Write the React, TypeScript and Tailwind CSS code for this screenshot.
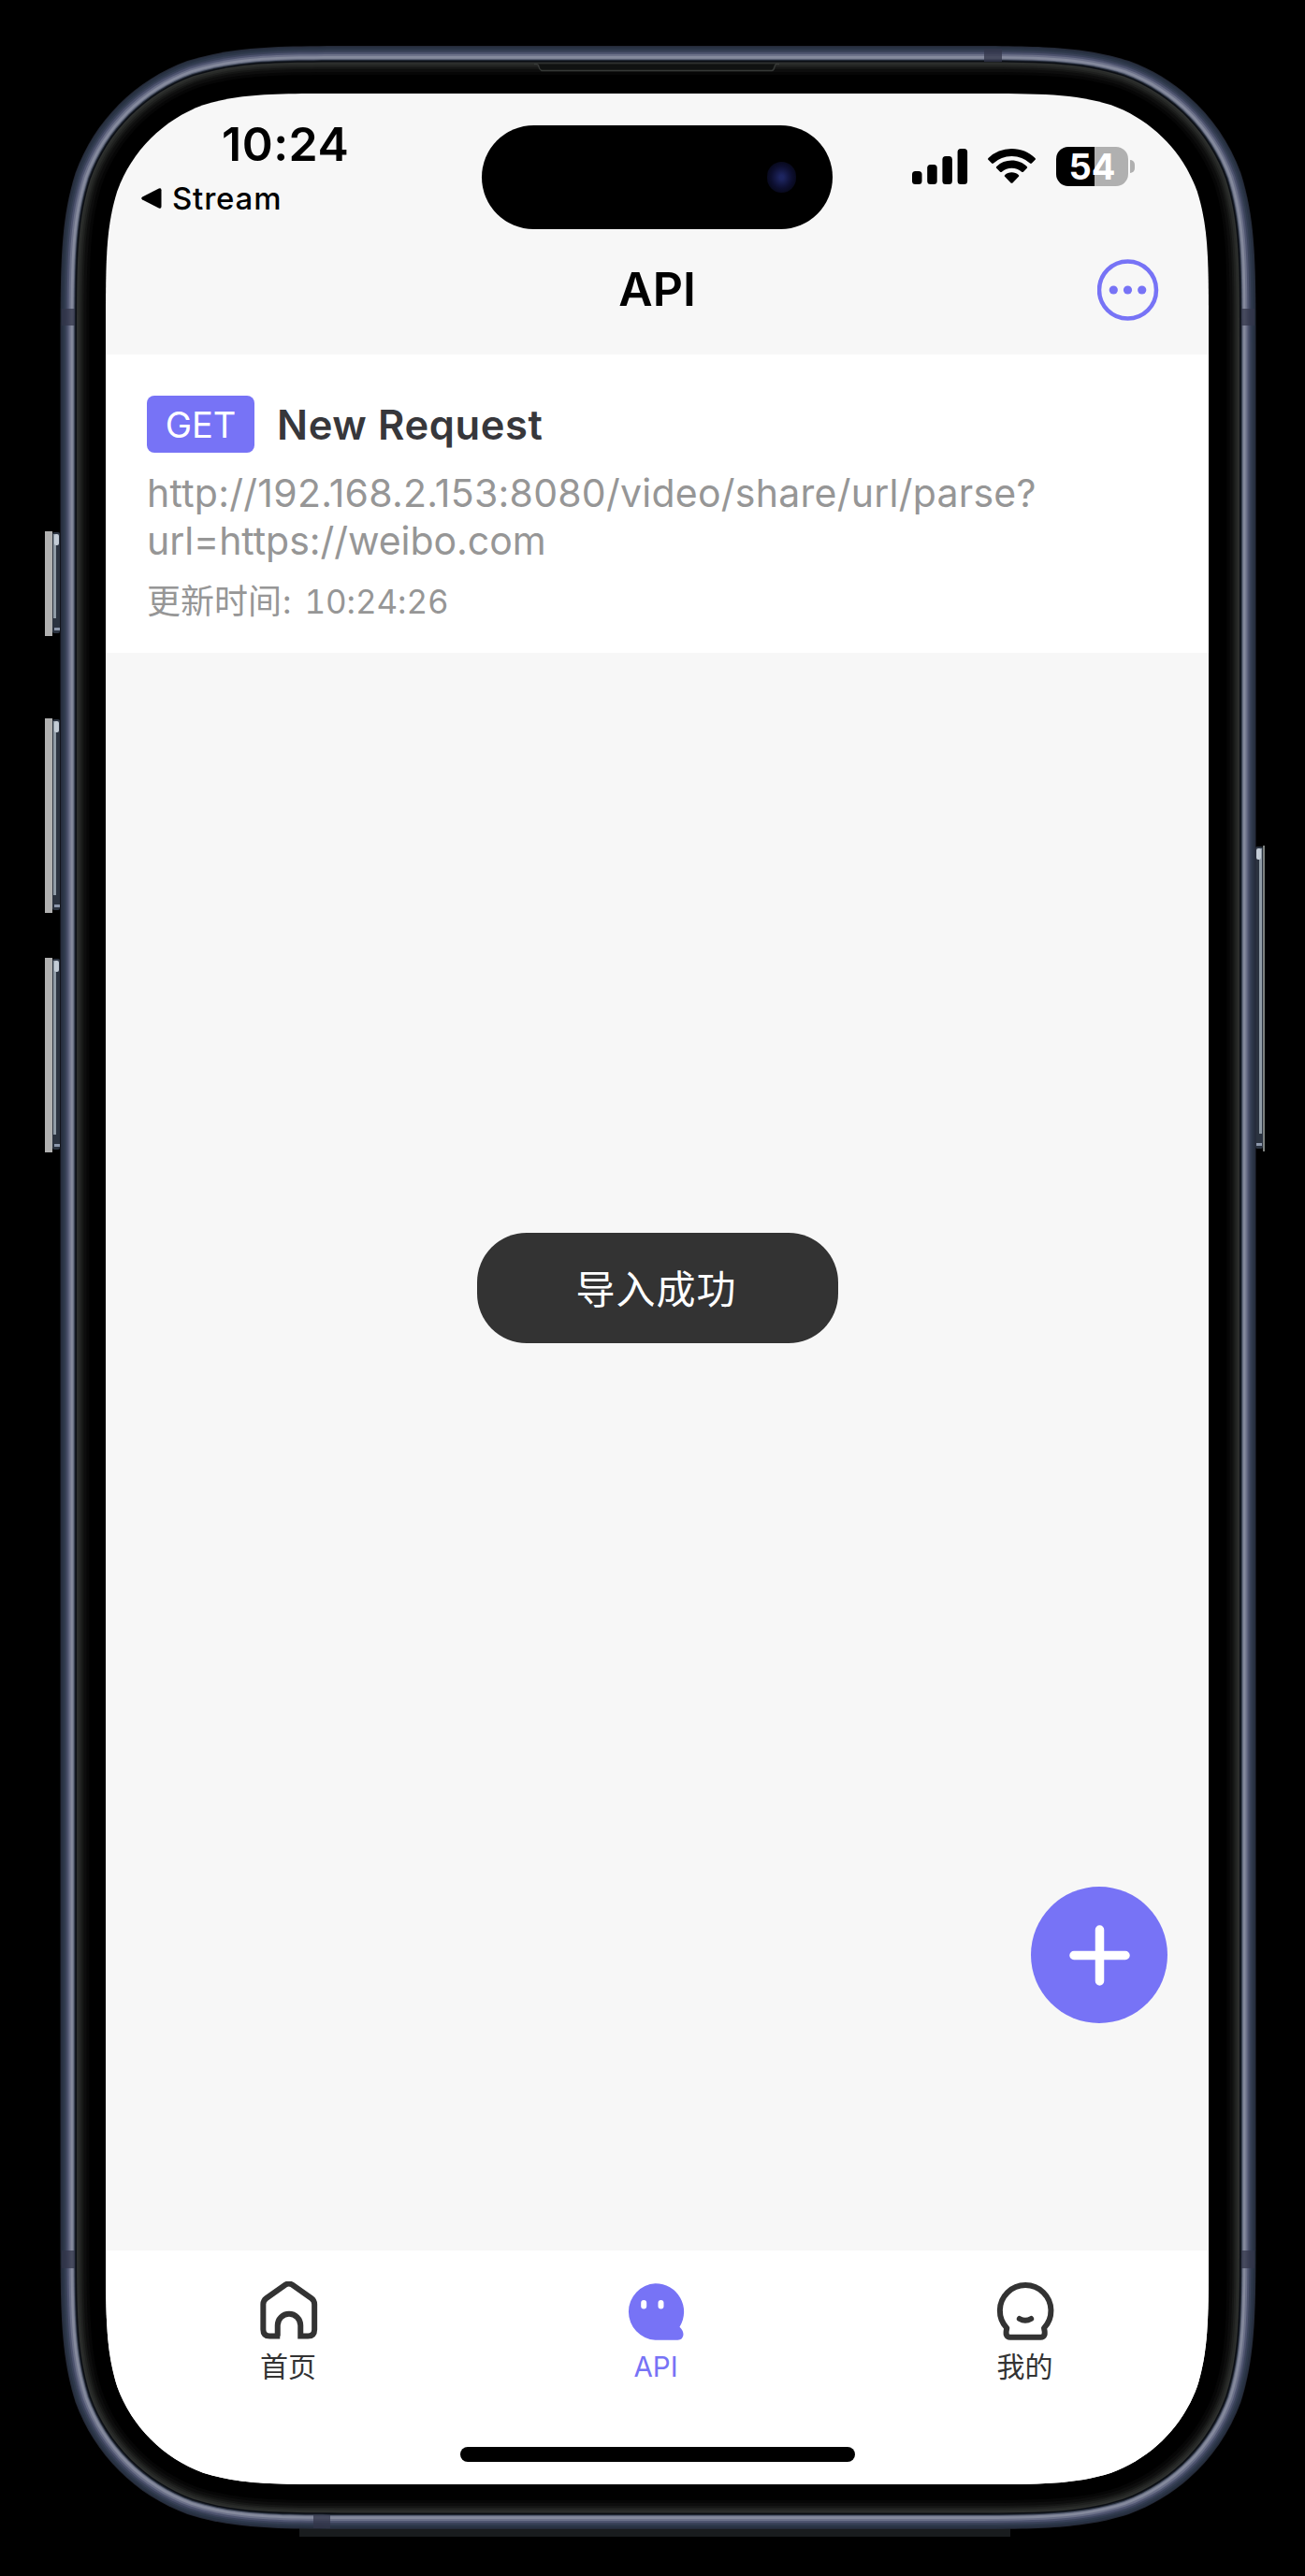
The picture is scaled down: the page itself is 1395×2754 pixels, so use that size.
import React from "react";

const W = 1395;
const H = 2754;

// Rounded rectangle with continuous-curvature corners.
function squircle(x0: number, y0: number, x1: number, y1: number, r: number) {
  const a = 1.528665 * r;
  const b = 1.08849296 * r;
  const c = 0.86840694 * r;
  const d = 0.63149379 * r;
  const e = 0.07491139 * r;
  const f = 0.37282383 * r;
  const g = 0.16905956 * r;
  return [
    `M${x0 + a} ${y0}L${x1 - a} ${y0}`,
    `C${x1 - b} ${y0} ${x1 - c} ${y0} ${x1 - d} ${y0 + e}`,
    `C${x1 - f} ${y0 + g} ${x1 - g} ${y0 + f} ${x1 - e} ${y0 + d}`,
    `C${x1} ${y0 + c} ${x1} ${y0 + b} ${x1} ${y0 + a}L${x1} ${y1 - a}`,
    `C${x1} ${y1 - b} ${x1} ${y1 - c} ${x1 - e} ${y1 - d}`,
    `C${x1 - g} ${y1 - f} ${x1 - f} ${y1 - g} ${x1 - d} ${y1 - e}`,
    `C${x1 - c} ${y1} ${x1 - b} ${y1} ${x1 - a} ${y1}L${x0 + a} ${y1}`,
    `C${x0 + b} ${y1} ${x0 + c} ${y1} ${x0 + d} ${y1 - e}`,
    `C${x0 + f} ${y1 - g} ${x0 + g} ${y1 - f} ${x0 + e} ${y1 - d}`,
    `C${x0} ${y1 - c} ${x0} ${y1 - b} ${x0} ${y1 - a}L${x0} ${y0 + a}`,
    `C${x0} ${y0 + b} ${x0} ${y0 + c} ${x0 + e} ${y0 + d}`,
    `C${x0 + g} ${y0 + f} ${x0 + f} ${y0 + g} ${x0 + d} ${y0 + e}`,
    `C${x0 + c} ${y0} ${x0 + b} ${y0} ${x0 + a} ${y0}Z`,
  ].join("");
}

// Metal rim, from the outer edge inwards: [inset, colour].
const RIM: [number, string][] = [
  [0, "#242936"],
  [1, "#283142"],
  [3, "#2e394b"],
  [5, "#3a4259"],
  [7, "#4e546f"],
  [9, "#6c7189"],
  [11, "#858a9d"],
  [13, "#7d8295"],
  [14, "#596074"],
  [15, "#232a37"],
  [16, "#0b0e14"],
  [17.5, "#2e302e"],
  [19, "#282a28"],
  [21, "#1f201f"],
  [23, "#151615"],
  [25, "#0d0d0d"],
  [28, "#060606"],
  [31, "#000000"],
];

function SideButton({ x, y, h, flip }: { x: number; y: number; h: number; flip?: boolean }) {
  return (
    <g transform={flip ? `translate(${x} ${y}) scale(-1 1)` : `translate(${x} ${y})`}>
      <rect x="0" y="0" width={flip ? 2 : 8} height={h} fill={flip ? "#7d817f" : "#b0b0b0"} />
      <rect x={flip ? 2 : 8} y="1" width="8" height={h - 4} rx="2" fill="#2b3340" />
      <rect x={flip ? 3 : 9} y="3" width="3" height={h - 22} fill="#8f9ba6" />
      <rect x={flip ? 4 : 10} y="3" width="5" height="12" rx="2" fill="#c3ccd6" />
      <rect x={flip ? 3 : 10} y={h - 9} width="6" height="3" fill="#8c97ab" />
    </g>
  );
}

function DeviceFrame() {
  return (
    <svg className="pointer-events-none absolute inset-0" width={W} height={H} viewBox={`0 0 ${W} ${H}`} aria-hidden="true">
      <SideButton x={48} y={568} h={112} />
      <SideButton x={48} y={768} h={208} />
      <SideButton x={48} y={1024} h={208} />
      <SideButton x={1352} y={904} h={327} flip />
      <rect x="320" y="2703" width="760" height="9" fill="#191c1e" />
      {RIM.map(([i, color]) => (
        <path key={i} d={squircle(64.5 + i, 49 + i, 1342.5 - i, 2704 - i, 215 - i)} fill={color} />
      ))}
      <g fill="#33364a" fillOpacity="0.75">
        <rect x="66" y="330" width="14" height="18" />
        <rect x="1327" y="330" width="14" height="18" />
        <rect x="66" y="2406" width="14" height="19" />
        <rect x="1327" y="2406" width="14" height="19" />
        <rect x="1052" y="52" width="19" height="14" />
        <rect x="335" y="2689" width="18" height="14" />
      </g>
      <path d="M571 68.500h2q2.500 0 3 3t3 4H825q2 0 3-4t3-3h2" fill="#101211" stroke="#363937" strokeWidth="1.500" />
    </svg>
  );
}

function StatusIcons() {
  return (
    <div className="flex items-center">
      <svg width="60" height="38" viewBox="0 0 60 38">
        <rect x="0" y="24" width="10.500" height="14" rx="3.500" />
        <rect x="16.200" y="17" width="10.500" height="21" rx="3.500" />
        <rect x="32.400" y="8" width="10.500" height="30" rx="3.500" />
        <rect x="48.600" y="0" width="10.500" height="38" rx="3.500" />
      </svg>
      <svg className="ml-[21px]" width="51" height="38" viewBox="0 0 51 38">
        <path d="M25.500 0C35.200 0 44 3.700 50.500 9.900c.6.600.6 1.300.1 1.900l-3.700 3.800c-.5.500-1.300.5-1.900 0A28.300 28.300 0 0 0 25.500 8 28.300 28.300 0 0 0 6 15.600c-.6.500-1.400.5-1.900 0L.4 11.800c-.5-.6-.5-1.300.1-1.900A36.200 36.200 0 0 1 25.500 0z" />
        <path d="M25.500 12.600c6.200 0 11.900 2.400 16.200 6.300.6.600.6 1.300.1 1.900l-3.900 3.900c-.5.500-1.200.5-1.800.1A15.600 15.600 0 0 0 25.500 20.700c-4 0-7.700 1.500-10.600 4.100-.6.400-1.300.4-1.800-.1l-3.900-3.900c-.5-.6-.5-1.300.1-1.900a24 24 0 0 1 16.200-6.300z" />
        <path d="M25.500 25.300c2.800 0 5.400 1 7.300 2.700.6.500.6 1.300.1 1.800l-6.400 6.600c-.6.600-1.400.6-2 0l-6.400-6.600c-.5-.5-.5-1.300.1-1.800 1.900-1.700 4.500-2.700 7.300-2.700z" />
      </svg>
      <div className="ml-[22px] flex h-[42px] w-[77px] items-center justify-center rounded-[13px] bg-linear-to-r from-black from-[41px] to-[#b0b0b0] to-[41px] text-[38px] leading-none font-bold text-white">
        54
      </div>
      <div className="ml-[2px] h-[14px] w-[5px] rounded-r-full bg-[#b0b0b0]" />
    </div>
  );
}

function StatusBar() {
  return (
    <div className="relative flex h-[156px] shrink-0 justify-between">
      <div className="pl-[38px]">
        <div className="mt-[26px] pl-[86px] text-[50px] leading-[56px] font-semibold tracking-[0.5px]">10:24</div>
        <div className="mt-[10px] flex items-center text-[33px] leading-[40px] font-medium tracking-[0.8px]">
          <svg width="22" height="22" viewBox="0 0 22 22">
            <path d="M1.200 9.600L18.800.6Q21.500-.4 21.500 2.200V19.800Q21.500 22.400 18.800 21.400L1.200 12.400Q-.8 11 1.200 9.600z" />
          </svg>
          <span className="ml-[11px]">Stream</span>
        </div>
      </div>
      <div className="mt-[57px] mr-[79px] h-[42px]">
        <StatusIcons />
      </div>
      <div className="absolute top-[34px] left-[402px] flex h-[111px] w-[375px] items-center justify-end rounded-full bg-black pr-[39px]">
        <div className="h-[33px] w-[31px] rounded-full bg-radial from-[#1d2560] from-10% via-[#0d0f30] via-50% to-[#030306]" />
      </div>
    </div>
  );
}

function NavBar() {
  return (
    <div className="relative flex h-[123px] shrink-0 items-start justify-center">
      <h1 className="mt-[23px] text-[50px] leading-[60px] font-semibold">API</h1>
      <svg className="absolute top-[21px] right-[53px]" width="66" height="66" viewBox="0 0 66 66" fill="#7773f6">
        <circle cx="32.500" cy="33" r="30.500" fill="none" stroke="#7773f6" strokeWidth="4.500" />
        <circle cx="17.300" cy="33" r="4.600" />
        <circle cx="32.500" cy="33" r="4.600" />
        <circle cx="47.700" cy="33" r="4.600" />
      </svg>
    </div>
  );
}

function RequestItem() {
  return (
    <div className="h-[319px] shrink-0 bg-white px-[44px] pt-[44px]">
      <div className="flex items-center">
        <span className="flex h-[61px] w-[115px] items-center justify-center rounded-[8px] bg-[#7773f6] text-[38px] leading-none text-white">
          GET
        </span>
        <span className="ml-[24px] text-[43.5px] leading-[60px] font-semibold tracking-[0.6px] whitespace-nowrap text-[#37373b]">New Request</span>
      </div>
      <div className="mt-[18px] text-[41px] leading-[50.5px] whitespace-nowrap text-[#969696]">
        <div className="tracking-[0.25px]">http://192.168.2.153:8080/video/share/url/parse?</div>
        <div className="tracking-[-0.05px]">url=https://weibo.com</div>
      </div>
      <div className="mt-[18px] text-[35px] leading-[44px] whitespace-nowrap text-[#969696] tabular-nums">
        <span className="text-[36px]">更新时间</span>
        <span className="ml-[1px]">:</span>
        <span className="ml-[14px] tracking-[-0.1px]">10:24:26</span>
      </div>
    </div>
  );
}

function TabBar() {
  return (
    <div className="relative grid h-[250px] shrink-0 grid-cols-3 bg-white pt-[33px] text-[30px] leading-[40px] text-[#333]">
      <div className="flex flex-col items-center pr-[3px]">
        <svg width="64" height="64" viewBox="0 0 64 64" fill="none" stroke="#333" strokeWidth="6">
          <path d="M22.500 58.500H11.500Q4.600 58.500 4.600 51.500V24.500Q4.600 20.500 8 18L28.500 3.600Q32 1.300 35.500 3.600L56 18Q59.400 20.500 59.400 24.500V51.500Q59.400 58.500 52.500 58.500H44.500V47A12.200 12.200 0 0 0 20 47V58.500" transform="translate(.75 0)" />
        </svg>
        <span className="mt-[7px]">首页</span>
      </div>
      <div className="flex flex-col items-center pr-[3px] text-[#7773f6]">
        <svg className="-ml-[1px]" width="64" height="64" viewBox="0 0 64 64">
          <path d="M31.500 2.200A30.400 30.400 0 0 1 57.500 48.700Q61.500 52.500 61.500 57Q61 62.500 55.500 62.700H31.500A30.300 30.300 0 0 1 31.500 2.200z" fill="#7773f6" />
          <rect x="16.200" y="20" width="6" height="9.500" rx="3" fill="#fff" />
          <rect x="34.500" y="20" width="6" height="9.500" rx="3" fill="#fff" />
        </svg>
        <span className="mt-[7px] text-[29.500px]">API</span>
      </div>
      <div className="flex flex-col items-center">
        <svg width="64" height="64" viewBox="0 0 64 64" fill="none" stroke="#333" strokeWidth="6" strokeLinecap="round" strokeLinejoin="round">
          <path d="M12.300 50A27.300 27.300 0 1 1 52 50Q54.600 59.700 48.500 59.700H15.800Q9.700 59.700 12.300 50z" />
          <path d="M25.800 40Q32 43.500 38.200 40" />
        </svg>
        <span className="mt-[7px]">我的</span>
      </div>
      <div className="absolute bottom-[24px] left-[379px] h-[16px] w-[422px] rounded-full bg-black" />
    </div>
  );
}

export default function App() {
  return (
    <div className="relative h-[2754px] w-[1395px] overflow-hidden bg-black pt-[100px] pl-[113px] font-['Inter','Noto_Sans_CJK_SC',sans-serif]">
      <DeviceFrame />
      <div
        className="relative flex h-[2556px] w-[1179px] flex-col bg-[#f7f7f7] text-black"
        style={{ clipPath: `path("${squircle(0, 0, 1179, 2556, 165)}")` }}
      >
        <StatusBar />
        <NavBar />
        <RequestItem />
        <div className="flex-1" />
        <TabBar />
        <div className="absolute top-[1218px] left-[397px] flex h-[118px] w-[386px] items-center justify-center rounded-[53px] bg-[#333] pt-[3px] pr-[3px] text-[42px] leading-none tracking-[1px] text-white">
          导入成功
        </div>
        <button className="absolute right-[44px] bottom-[493px] flex h-[146px] w-[146px] items-center justify-center rounded-full bg-[#7773f6]">
          <svg width="65" height="65" viewBox="0 0 65 65" stroke="#fff" strokeWidth="9.500" strokeLinecap="round">
            <path d="M32.500 5V60M5 32.500H60" />
          </svg>
        </button>
      </div>
    </div>
  );
}
